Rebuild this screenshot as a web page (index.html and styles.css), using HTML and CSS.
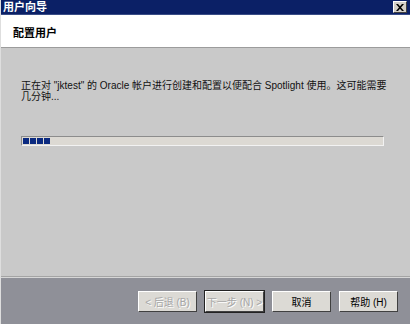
FILE: index.html
```html
<!DOCTYPE html>
<html lang="zh-CN">
<head>
    <meta charset="UTF-8">
    <title>用户向导</title>
    <link rel="stylesheet" href="styles.css">
</head>
<body>
    <div class="wizard">
        <div class="titlebar">
            <span class="title-text">用户向导</span>
            <span class="close-btn">
                <svg width="8" height="7" viewBox="0 0 8 7">
                    <path d="M0 0h2l2 2.2L6 0h2L5 3.5 8 7H6L4 4.8 2 7H0l3-3.5z" fill="#000"/>
                </svg>
            </span>
        </div>

        <div class="header">
            <div class="header-title">配置用户</div>
        </div>

        <div class="content">
            <p class="message">正在对 "jktest" 的 Oracle 帐户进行创建和配置以便配合 Spotlight 使用。这可能需要几分钟...</p>
            <div class="progress">
                <span class="block"></span>
                <span class="block"></span>
                <span class="block"></span>
                <span class="block"></span>
            </div>
        </div>

        <div class="footer">
            <button class="btn" disabled>&lt; 后退 (B)</button>
            <button class="btn btn-focus" disabled>下一步 (N) &gt;</button>
            <button class="btn">取消</button>
            <button class="btn">帮助 (H)</button>
        </div>
    </div>
</body>
</html>
```

FILE: styles.css
```css
* {
    margin: 0;
    padding: 0;
    box-sizing: border-box;
}

body {
    width: 410px;
    height: 324px;
    overflow: hidden;
    font-family: "Liberation Sans", "Noto Sans CJK SC", sans-serif;
    font-size: 11px;
    color: #000;
    background: #c9c9c9;
}

.wizard {
    width: 410px;
    height: 324px;
    display: flex;
    flex-direction: column;
    border-left: 1px solid #dedede;
}

.titlebar {
    height: 15px;
    background: #0b2066;
    display: flex;
    align-items: center;
    justify-content: space-between;
    padding: 0 3px 0 2px;
    border-bottom: 1px solid #3a4d86;
}

.title-text {
    color: #fff;
    font-weight: bold;
    font-size: 11px;
    line-height: 14px;
}

.close-btn {
    width: 14px;
    height: 12px;
    background: #d4d0c8;
    border: 1px solid;
    border-color: #fff #404040 #404040 #fff;
    display: flex;
    align-items: center;
    justify-content: center;
}

.header {
    height: 33px;
    background: #fff;
    display: flex;
    align-items: center;
    padding-left: 12px;
    border-bottom: 1px solid #9c9c9c;
    box-shadow: 0 1px 0 #e6e6e6;
}

.header-title {
    font-weight: bold;
    font-size: 11px;
    margin-top: 2px;
}

.content {
    flex: 1;
    padding: 32px 18px 0 20px;
    background: #c9c9c9;
}

.message {
    line-height: 11px;
    font-size: 10px;
    color: #111;
}

.progress {
    margin-top: 34px;
    width: 363px;
    height: 10px;
    background: #dcd9d3;
    border-top: 1px solid #8c8c8c;
    border-left: 1px solid #8c8c8c;
    border-bottom: 1px solid #f2f2f2;
    border-right: 1px solid #f2f2f2;
    display: flex;
    gap: 1px;
    padding: 1px 1px;
}

.block {
    width: 6px;
    height: 6px;
    background: #0b2a80;
}

.footer {
    height: 48px;
    background: #8f9098;
    border-top: 1px solid #a4a4a4;
    box-shadow: inset 0 1px 0 #d6d6d6;
    display: flex;
    align-items: center;
    justify-content: flex-end;
    gap: 8px;
    padding: 1px 12px 0 0;
}

.btn {
    width: 59px;
    height: 21px;
    padding: 0;
    white-space: nowrap;
    background: #dcdad5;
    border: 1px solid;
    border-color: #fff #404040 #404040 #fff;
    font-family: "Liberation Sans", "Noto Sans CJK SC", sans-serif;
    font-size: 10px;
    color: #000;
}

.btn:disabled {
    color: #a6a6a6;
    text-shadow: 1px 1px 0 #fff;
}

.btn-focus {
    outline: 1px solid #222;
}
```
